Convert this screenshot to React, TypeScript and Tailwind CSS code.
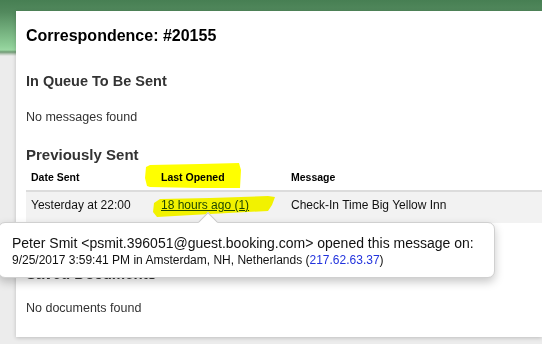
import React from "react";

/* Correspondence detail panel with an "opened" tooltip over the sent list */

function Highlights() {
  // highlighter strokes over "Last Opened" and the link
  return (
    <svg
      className="pointer-events-none absolute left-0 top-0 mix-blend-multiply"
      width="542"
      height="344"
      viewBox="0 0 542 344"
    >
      <path
        d="M146 167 L150 165 L200 164 L239 163 L241 170 L240 188 L200 188 L150 187 L147 186 L145 178 Z"
        fill="#ffff00"
      />
      <path
        d="M154 203 L160 199 L210 198 L268 196 L275 197 L272 205 L268 211 L210 214 L157 217 L153 212 Z"
        fill="#ffff00"
      />
    </svg>
  );
}

function OpenedTooltip() {
  return (
    <div className="absolute left-[-2px] top-[222px] h-[56px] w-[497px] rounded-[7px] border border-[#d0d0d0] bg-white pl-[13px] pt-[12px] text-[#111] shadow-[0_4px_10px_rgba(0,0,0,0.22)]">
      <div className="absolute left-[202px] top-[-8px] h-[14px] w-[14px] rotate-45 border-l border-t border-[#c8c8c8] bg-white" />
      <div className="relative text-[14px] leading-[17px]">
        Peter Smit &lt;psmit.396051@guest.booking.com&gt; opened this message on:
      </div>
      <div className="relative text-[12px] leading-[16px]">
        9/25/2017 3:59:41 PM in Amsterdam, NH, Netherlands (
        <span className="text-[#2233dd]">217.62.63.37</span>)
      </div>
    </div>
  );
}

export default function App() {
  return (
    <div className="relative h-[344px] w-[542px] overflow-hidden bg-[linear-gradient(to_bottom,#477f53_0px,#52895d_12px,#8fcf98_46px,#9ad7a2_50px,#6f9a74_52px,#b8c8b8_54px,#ececec_56px,#ececec_100%)] font-['Liberation_Sans',Arial,sans-serif]">
      <div className="ml-4 mt-[11px] h-[326px] bg-white pl-[10px] shadow-[0_1px_4px_rgba(0,0,0,0.2)]">
        <h1 className="pt-[15px] text-[16px] font-bold leading-[20px] text-black">
          Correspondence: #20155
        </h1>

        <h2 className="mt-[26px] text-[14.5px] font-bold leading-[18px] text-[#333]">
          In Queue To Be Sent
        </h2>
        <p className="mt-[19px] text-[12.5px] leading-[16px] text-[#333]">No messages found</p>

        <h2 className="mt-[21px] text-[15px] font-bold leading-[18px] text-[#333]">
          Previously Sent
        </h2>

        {/* sent messages table */}
        <div className="grid grid-cols-[130px_130px_1fr] border-b-2 border-[#dcdcdc] pb-[6px] pt-[7px] text-[10.5px] font-bold leading-[13px] text-black">
          <div className="pl-[5px]">Date Sent</div>
          <div className="pl-[5px]">Last Opened</div>
          <div className="pl-[5px]">Message</div>
        </div>
        <div className="grid grid-cols-[130px_130px_1fr] bg-[#f2f2f2] pb-[11px] pt-[6px] text-[12px] leading-[14px] text-[#111]">
          <div className="pl-[5px]">Yesterday at 22:00</div>
          <div className="pl-[5px]">
            <span className="text-[#1e4620] underline">18 hours ago (1)</span>
          </div>
          <div className="pl-[5px]">Check-In Time Big Yellow Inn</div>
        </div>

        <h2 className="mt-[42px] text-[15px] font-bold leading-[18px] text-[#333]">
          Saved Documents
        </h2>
        <p className="mt-[17px] text-[12.5px] leading-[16px] text-[#333]">No documents found</p>
      </div>

      <Highlights />
      <OpenedTooltip />
    </div>
  );
}
